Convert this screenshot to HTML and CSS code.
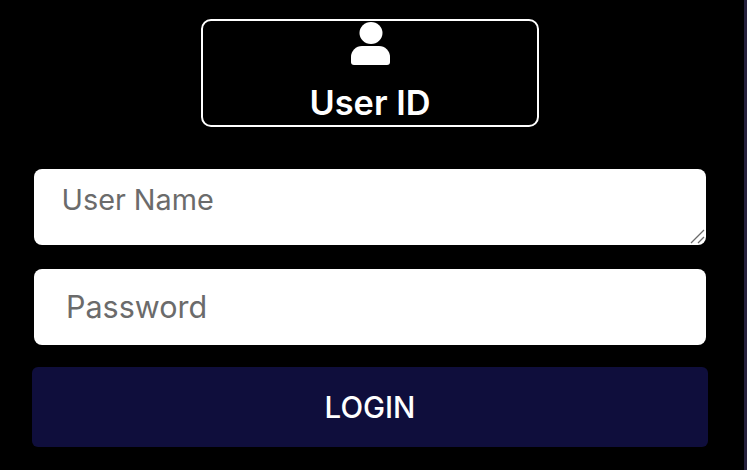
FILE: index.html
```html
<!DOCTYPE html>
<html lang="en">
<head>
<meta charset="utf-8">
<title>User ID Login</title>
<link rel="stylesheet" href="styles.css">
</head>
<body>
<div class="page">
  <main class="panel">
    <div class="badge">
      <svg class="badge-icon" viewBox="0 0 39 44" aria-hidden="true">
        <ellipse cx="20" cy="12" rx="11.5" ry="11" fill="#fff"/>
        <path d="M11 25h17a11 11 0 0 1 11 11v5a3 3 0 0 1-3 3H3a3 3 0 0 1-3-3v-5a11 11 0 0 1 11-11z" fill="#fff"/>
      </svg>
      <span class="badge-label">User ID</span>
    </div>
    <form class="form">
      <div class="name-wrap">
        <textarea class="field field-name" placeholder="User Name"></textarea>
        <svg class="grip" viewBox="0 0 15 15" aria-hidden="true">
          <path d="M1 14 14 1M8 14l6-6" fill="none" stroke="#6a6a6a" stroke-width="1.3"/>
        </svg>
      </div>
      <input class="field field-pass" type="password" placeholder="Password">
      <button class="login" type="button">LOGIN</button>
    </form>
  </main>
  <div class="edge"></div>
</div>
</body>
</html>
```
FILE: styles.css
```css
* { box-sizing: border-box; }
html, body { margin: 0; height: 100%; background: #000; overflow: hidden; }
body { font-family: "Inter", "Noto Sans", sans-serif; }
.page { display: flex; height: 470px; }
.panel { flex: 1; display: flex; flex-direction: column; align-items: center; padding-top: 19px; padding-right: 4px; }
.edge { width: 3px; background: #24203c; }
.badge {
  width: 338px; height: 108px;
  border: 2px solid #fff; border-radius: 10px;
  display: flex; flex-direction: column; align-items: center;
  color: #fff;
}
.badge-icon { width: 39px; height: 44px; display: block; }
.badge-label { font-size: 34.3px; font-weight: 600; line-height: 40px; margin-top: 18px; }
.form { display: flex; flex-direction: column; align-items: center; margin-top: 42px; width: 676px; }
.name-wrap { position: relative; width: 672px; height: 76px; }
.grip { position: absolute; right: 1px; bottom: 1px; width: 15px; height: 15px; pointer-events: none; }
.field {
  display: block; width: 672px; height: 76px;
  background: #fff; border: 0; border-radius: 8px; outline: 0;
  font-family: inherit; color: #666;
}
.field::placeholder { color: #6b6b6b; opacity: 1; }
.field-name { padding: 14px 27.5px; font-size: 28.8px; line-height: 34px; resize: vertical; }
.field-name::-webkit-resizer { background: transparent; }
.field-pass { margin-top: 24px; padding: 0 32px 1px; font-size: 30.5px; }
.login {
  width: 676px; height: 80px; margin-top: 22px;
  background: #0f0e3c; color: #fff; border: 0; border-radius: 6px;
  font-family: inherit; font-size: 29.5px; font-weight: 500;
}
```
